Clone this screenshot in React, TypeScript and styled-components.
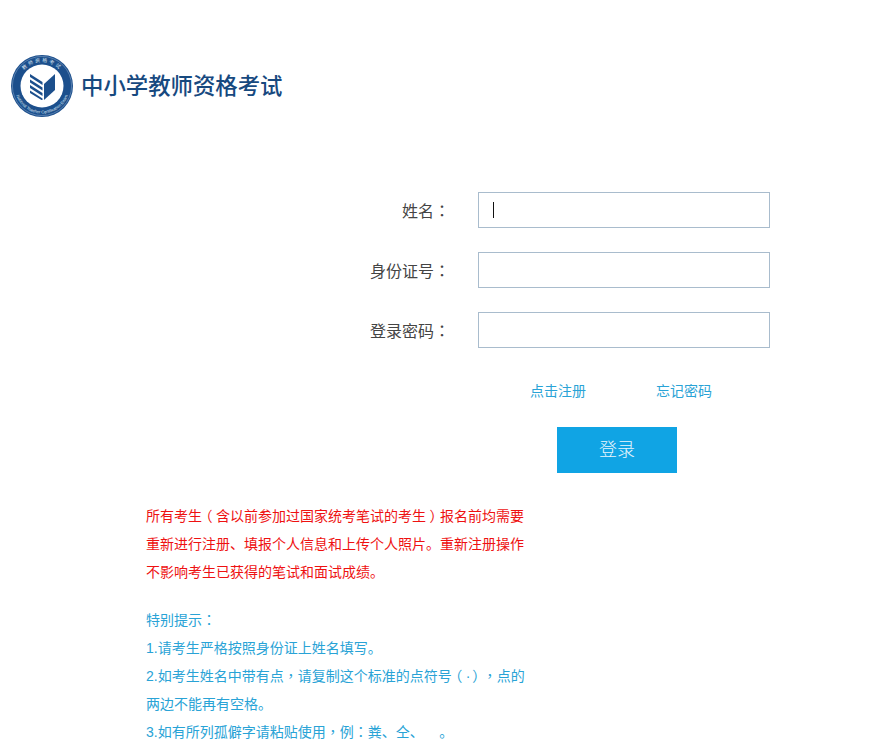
import styled, { createGlobalStyle } from "styled-components";

const GlobalStyle = createGlobalStyle`
  html, body {
    margin: 0;
    padding: 0;
    background: #fff;
  }
  body {
    font-family: "Liberation Sans", "Noto Sans CJK SC", sans-serif;
  }
`;

const fields = [
  { label: "姓名", active: true },
  { label: "身份证号", active: false },
  { label: "登录密码", active: false },
];

const Logo = () => (
  <svg width="64" height="64" viewBox="0 0 64 64">
    <circle cx="32" cy="32" r="31" fill="#1c4f8c" />
    <circle cx="32" cy="32" r="29.600" fill="none" stroke="#7f9fc6" strokeWidth="0.600" />
    <circle cx="32" cy="32" r="21.500" fill="#fff" />
    <defs>
      <path id="ring-top" d="M8 32a24 24 0 0 1 48 0" />
      <path id="ring-bottom" d="M4.500 32a27.500 27.500 0 0 0 55 0" />
    </defs>
    <text fill="#dfe8f3" fontSize="5" letterSpacing="1.800" fontFamily="'Noto Sans CJK SC', sans-serif">
      <textPath href="#ring-top" startOffset="50%" textAnchor="middle">
        教师资格考试
      </textPath>
    </text>
    <text fill="#dfe8f3" fontSize="4.200" fontFamily="'Liberation Sans', sans-serif">
      <textPath href="#ring-bottom" startOffset="50%" textAnchor="middle">
        National Teacher Certification Exam
      </textPath>
    </text>
    <path d="M34 30l11-10v16L34 46z" fill="#1c4f8c" />
    <path
      d="M20 20l12.500 8v3L20 23zM20 25.500l12.500 8v3L20 28.500zM20 31l12.500 8v3L20 34zM20 36.500l12.500 8v1.500h-1L20 39z"
      fill="#1c4f8c"
    />
  </svg>
);

const App = () => {
  return (
    <Page>
      <GlobalStyle />
      <Header>
        <Logo />
        <SiteTitle>中小学教师资格考试</SiteTitle>
      </Header>
      <Form>
        {fields.map((field) => (
          <Row key={field.label}>
            <Label>
              {field.label}
              <Punct>：</Punct>
            </Label>
            <InputWrap>
              <TextInput type="text" />
              {field.active && <Caret />}
            </InputWrap>
          </Row>
        ))}
        <Links>
          <LinkText href="#">点击注册</LinkText>
          <LinkText href="#">忘记密码</LinkText>
        </Links>
        <LoginButton type="button">登录</LoginButton>
      </Form>
      <Notes>
        <Warning>
          所有考生<Paren>（</Paren>含以前参加过国家统考笔试的考生<Paren>）</Paren>报名前均需要
          <br />
          重新进行注册、填报个人信息和上传个人照片。重新注册操作
          <br />
          不影响考生已获得的笔试和面试成绩。
        </Warning>
        <Tips>
          特别提示<Punct>：</Punct>
          <br />
          1.请考生严格按照身份证上姓名填写。
          <br />
          2.如考生姓名中带有点<Punct>，</Punct>请复制这个标准的点符号<Paren>（</Paren>
          <MiddleDot>·</MiddleDot>
          <Paren>）</Paren>
          <Punct>，</Punct>点的
          <br />
          两边不能再有空格。
          <br />
          3.如有所列孤僻字请粘贴使用<Punct>，</Punct>例<Punct>：</Punct>粪、仝、&nbsp;&nbsp;&nbsp;&nbsp;。
        </Tips>
      </Notes>
    </Page>
  );
};

export default App;

const Page = styled.div`
  width: 889px;
  height: 748px;
  overflow: hidden;
  background: #fff;
`;

const Header = styled.header`
  display: flex;
  align-items: center;
  gap: 7px;
  padding: 54px 0 0 10px;
  height: 64px;
`;

const SiteTitle = styled.h1`
  margin: 0 0 4px;
  font-size: 22.400px;
  font-weight: 500;
  line-height: 30px;
  color: #17497f;
  font-family: "Noto Sans CJK SC", sans-serif;
`;

const Form = styled.form`
  display: flex;
  flex-direction: column;
  align-items: flex-start;
  padding: 74px 0 0 0;
`;

const Row = styled.div`
  display: flex;
  align-items: center;
  height: 36px;
  margin-bottom: 24px;
`;

const Label = styled.label`
  width: 450px;
  text-align: right;
  font-size: 16px;
  line-height: 36px;
  color: #444;
  padding-top: 3px;
  box-sizing: border-box;
`;

// centred full-width punctuation, the TC font sets these in the middle of the cell
const Punct = styled.span`
  font-family: "Noto Sans CJK TC", sans-serif;
  line-height: 1;
`;

// half-width glyph with padding, so the bracket sits in the middle of its cell
const Paren = styled.span`
  display: inline-block;
  padding: 0 3.500px;
  line-height: 1;
  font-family: "Noto Sans CJK SC", sans-serif;
  font-feature-settings: "halt";
`;

const MiddleDot = styled.span`
  display: inline-block;
  width: 3px;
  line-height: 1;
  text-align: center;
`;

const InputWrap = styled.div`
  position: relative;
  margin-left: 28px;
`;

const TextInput = styled.input`
  display: block;
  box-sizing: border-box;
  width: 292px;
  height: 36px;
  padding: 0 14px;
  border: 1px solid #a9bccd;
  border-radius: 0;
  outline: none;
  background: #fff;
`;

const Caret = styled.span`
  position: absolute;
  left: 15px;
  top: 10px;
  width: 1px;
  height: 16px;
  background: #111;
`;

const Links = styled.div`
  display: flex;
  gap: 70px;
  margin: 4px 0 0 530px;
  height: 30px;
`;

const LinkText = styled.a`
  font-size: 14px;
  line-height: 30px;
  color: #29a3d6;
  text-decoration: none;
`;

const LoginButton = styled.button`
  width: 120px;
  height: 46px;
  margin: 21px 0 0 557px;
  border: 0;
  padding: 0 0 4px;
  background: #10a4e4;
  color: #e8f6fd;
  font-family: inherit;
  font-size: 18px;
  font-weight: 300;
`;

const Notes = styled.section`
  width: 380px;
  margin: 29px 0 0 146px;
  font-size: 14px;
  line-height: 28px;
`;

const Warning = styled.p`
  margin: 0;
  color: #ee1111;
`;

const Tips = styled.p`
  margin: 20px 0 0;
  color: #29a3d6;
`;
